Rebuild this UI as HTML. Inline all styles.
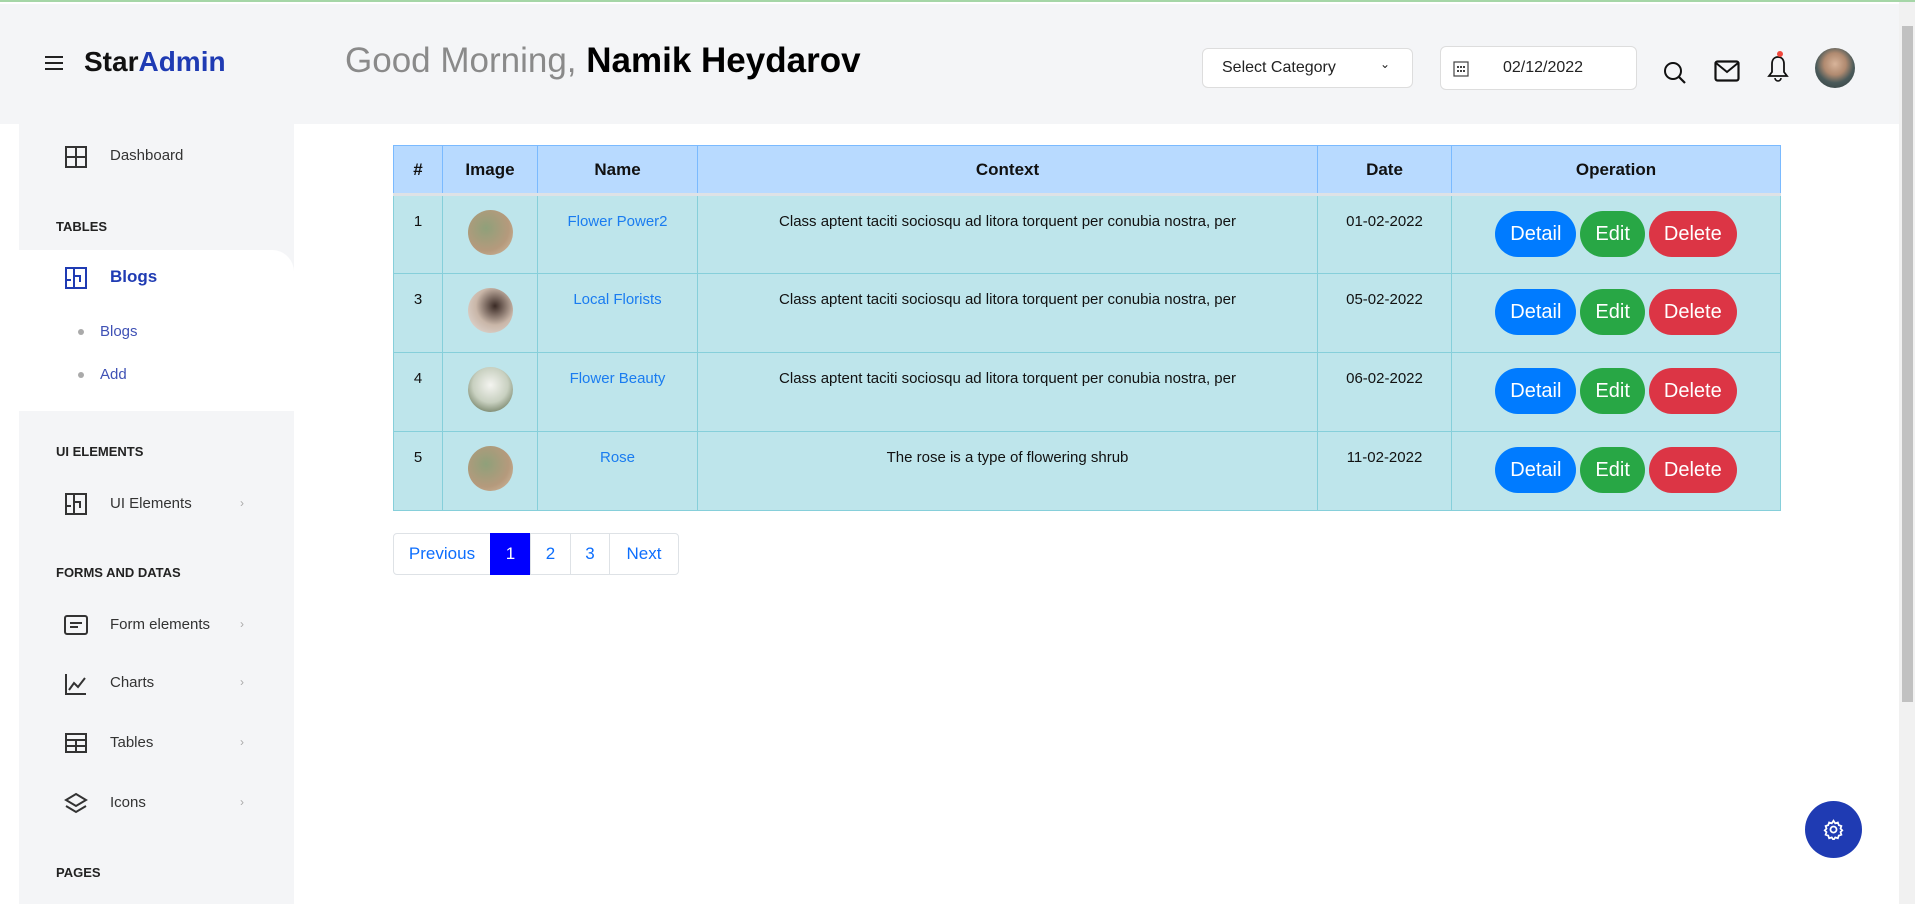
<!DOCTYPE html>
<html><head><meta charset="utf-8"><style>
*{box-sizing:border-box;margin:0;padding:0}
body{width:1915px;height:902px;overflow:hidden;background:#fff;font-family:"Liberation Sans",sans-serif;position:relative;border-top:2px solid #a5d6a7}
.hdr{position:absolute;left:0;top:2px;width:1899px;height:120px;background:#f4f5f7}
.abs{position:absolute}
.side{position:absolute;left:19px;top:122px;width:275px;height:780px;background:#f4f5f7}
.sb{position:absolute;right:0;top:0;width:16px;height:902px;background:#f1f1f1}
.sb div{position:absolute;left:3px;top:24px;width:11px;height:676px;background:#c1c1c1}
.sitem{position:absolute;left:110px;font-size:15px;color:#333}
.sec{position:absolute;left:56px;font-size:13px;font-weight:bold;color:#222}
.ico{position:absolute;left:64px;width:24px;height:24px}
.chev{position:absolute;left:240px;font-size:12px;color:#aaa}
table{position:absolute;left:393px;top:143px;width:1388px;border-collapse:collapse;font-size:15px}
th{background:#b8daff;border:1px solid #7abaff;height:49px;font-size:17px;font-weight:bold;color:#111;border-bottom:3px solid #dee2e6}
td{background:#bee5eb;border:1px solid #86cfda;height:79px;vertical-align:top;text-align:center;padding-top:17px;color:#111}
td a{color:#1a7cf0;text-decoration:none}
.av{width:45px;height:45px;border-radius:50%;margin:0 auto;margin-top:-3px;background:radial-gradient(circle at 40% 40%,#8fa07a,#b59a7c 60%,#d6c0a6)}
.btn{display:inline-block;height:46px;line-height:46px;border-radius:23px;color:#fff;font-size:20px;padding:0 15px;margin:0 2px}
.pg{position:absolute;top:531px;height:42px;border:1px solid #dee2e6;color:#0d6efd;font-size:17px;line-height:40px;text-align:center}
</style></head><body>
<div class="hdr"></div>
<div class="abs" style="left:45px;top:54px;width:18px;height:2px;background:#222;box-shadow:0 6px 0 #222,0 12px 0 #222"></div>
<div class="abs" style="left:84px;top:44px;font-size:28px;font-weight:bold;color:#111">Star<span style="color:#1f3bb3">Admin</span></div>
<div class="abs" style="left:345px;top:39px;font-size:35px;color:#8a8a8a">Good Morning, <span style="color:#000;font-weight:bold">Namik Heydarov</span></div>
<div class="abs" style="left:1202px;top:46px;width:211px;height:40px;background:#fff;border:1px solid #ddd;border-radius:6px;font-size:16px;color:#222;padding:10px 19px">Select Category<span style="position:absolute;right:22px;top:8px;font-size:12px">&#8964;</span></div>
<div class="abs" style="left:1440px;top:44px;width:197px;height:44px;background:#fff;border:1px solid #ddd;border-radius:6px;font-size:16px;color:#222;padding:12px 0 0 62px">02/12/2022
<svg class="abs" style="left:12px;top:13px" width="16" height="17" viewBox="0 0 16 17"><rect x="1" y="2" width="14" height="14" fill="none" stroke="#444" stroke-width="1.2"/><g fill="#444"><rect x="4" y="6" width="2" height="2"/><rect x="7" y="6" width="2" height="2"/><rect x="10" y="6" width="2" height="2"/><rect x="4" y="10" width="2" height="2"/><rect x="7" y="10" width="2" height="2"/><rect x="10" y="10" width="2" height="2"/></g></svg></div>
<svg class="abs" style="left:1662px;top:58px" width="26" height="26" viewBox="0 0 26 26"><circle cx="11" cy="11" r="8" fill="none" stroke="#111" stroke-width="2"/><path d="M17 17l6 6" stroke="#111" stroke-width="2.2"/></svg>
<svg class="abs" style="left:1714px;top:58px" width="26" height="22" viewBox="0 0 26 22"><rect x="1.5" y="1.5" width="23" height="19" rx="2" fill="none" stroke="#111" stroke-width="2.2"/><path d="M2 3l11 9 11-9" fill="none" stroke="#111" stroke-width="2"/></svg>
<svg class="abs" style="left:1765px;top:48px" width="26" height="34" viewBox="0 0 26 34"><path d="M13 7c-4 0-6 3-6 7v8l-3 4h18l-3-4v-8c0-4-2-7-6-7z" fill="none" stroke="#111" stroke-width="1.8"/><path d="M10 28a3 3 0 006 0" fill="none" stroke="#111" stroke-width="1.6"/><circle cx="15" cy="4" r="3" fill="#f0483e"/></svg>
<div class="abs" style="left:1815px;top:46px;width:40px;height:40px;border-radius:50%;background:radial-gradient(circle at 50% 40%,#d8b49a 0,#b08a70 35%,#4a5a5a 60%,#2f3a3a)"></div>
<div class="side"></div>
<div class="abs" style="left:19px;top:248px;width:275px;height:161px;background:#fff;border-radius:0 22px 0 0"></div>
<svg class="ico" style="top:143px" viewBox="0 0 24 24"><rect x="2" y="2" width="20" height="20" fill="none" stroke="#333" stroke-width="2"/><path d="M12 2v20M2 12h20" stroke="#333" stroke-width="2"/></svg>
<div class="sitem" style="top:145px">Dashboard</div>
<div class="sec" style="top:217px">TABLES</div>
<svg class="ico" style="top:264px" viewBox="0 0 24 24"><rect x="2" y="2" width="20" height="20" fill="none" stroke="#1f3bb3" stroke-width="2"/><path d="M10 2v20M10 10h6v6M2 14h5" fill="none" stroke="#1f3bb3" stroke-width="2"/></svg>
<div class="sitem" style="top:265px;font-size:17px;font-weight:bold;color:#1f3bb3">Blogs</div>
<div class="abs" style="left:78px;top:327px;width:6px;height:6px;border-radius:50%;background:#aaa"></div>
<div class="sitem" style="left:100px;top:321px;color:#3f51b5">Blogs</div>
<div class="abs" style="left:78px;top:370px;width:6px;height:6px;border-radius:50%;background:#aaa"></div>
<div class="sitem" style="left:100px;top:364px;color:#3f51b5">Add</div>
<div class="sec" style="top:442px">UI ELEMENTS</div>
<svg class="ico" style="top:490px" viewBox="0 0 24 24"><rect x="2" y="2" width="20" height="20" fill="none" stroke="#333" stroke-width="2"/><path d="M10 2v20M10 10h6v6M2 14h5" fill="none" stroke="#333" stroke-width="2"/></svg>
<div class="sitem" style="top:493px">UI Elements</div><div class="chev" style="top:494px">›</div>
<div class="sec" style="top:563px">FORMS AND DATAS</div>
<svg class="ico" style="top:611px" viewBox="0 0 24 24"><rect x="1" y="3" width="22" height="18" rx="2" fill="none" stroke="#333" stroke-width="2"/><path d="M6 10h12M6 14h8" stroke="#333" stroke-width="2"/></svg>
<div class="sitem" style="top:614px">Form elements</div><div class="chev" style="top:615px">›</div>
<svg class="ico" style="top:670px" viewBox="0 0 24 24"><path d="M2 2v20h20M5 18l5-7 4 4 7-9" fill="none" stroke="#333" stroke-width="2"/></svg>
<div class="sitem" style="top:672px">Charts</div><div class="chev" style="top:673px">›</div>
<svg class="ico" style="top:729px" viewBox="0 0 24 24"><rect x="2" y="3" width="20" height="18" fill="none" stroke="#333" stroke-width="2"/><path d="M2 9h20M12 9v12M2 15h20" stroke="#333" stroke-width="2"/></svg>
<div class="sitem" style="top:732px">Tables</div><div class="chev" style="top:733px">›</div>
<svg class="ico" style="top:789px" viewBox="0 0 24 24"><path d="M12 3l10 6-10 6-10-6z M2 15l10 6 10-6" fill="none" stroke="#333" stroke-width="2"/></svg>
<div class="sitem" style="top:792px">Icons</div><div class="chev" style="top:793px">›</div>
<div class="sec" style="top:863px">PAGES</div>
<table>
<tr><th style="width:49px">#</th><th style="width:95px">Image</th><th style="width:160px">Name</th><th style="width:620px">Context</th><th style="width:134px">Date</th><th>Operation</th></tr>
<tr><td>1</td><td><div class="av"></div></td><td><a>Flower Power2</a></td><td>Class aptent taciti sociosqu ad litora torquent per conubia nostra, per</td><td>01-02-2022</td><td style="padding-top:15px"><span class="btn" style="background:#007bff">Detail</span><span class="btn" style="background:#28a745">Edit</span><span class="btn" style="background:#dc3545">Delete</span></td></tr>
<tr><td>3</td><td><div class="av" style="background:radial-gradient(circle at 60% 40%,#3a2a25,#c9b6a8 50%,#e8e2de)"></div></td><td><a>Local Florists</a></td><td>Class aptent taciti sociosqu ad litora torquent per conubia nostra, per</td><td>05-02-2022</td><td style="padding-top:15px"><span class="btn" style="background:#007bff">Detail</span><span class="btn" style="background:#28a745">Edit</span><span class="btn" style="background:#dc3545">Delete</span></td></tr>
<tr><td>4</td><td><div class="av" style="background:radial-gradient(circle at 50% 40%,#f4f4f0,#c8d0c0 50%,#4a5a3a)"></div></td><td><a>Flower Beauty</a></td><td>Class aptent taciti sociosqu ad litora torquent per conubia nostra, per</td><td>06-02-2022</td><td style="padding-top:15px"><span class="btn" style="background:#007bff">Detail</span><span class="btn" style="background:#28a745">Edit</span><span class="btn" style="background:#dc3545">Delete</span></td></tr>
<tr><td>5</td><td><div class="av"></div></td><td><a>Rose</a></td><td>The rose is a type of flowering shrub</td><td>11-02-2022</td><td style="padding-top:15px"><span class="btn" style="background:#007bff">Detail</span><span class="btn" style="background:#28a745">Edit</span><span class="btn" style="background:#dc3545">Delete</span></td></tr>
</table>
<div class="pg" style="left:393px;width:98px;border-radius:4px 0 0 4px">Previous</div>
<div class="pg" style="left:490px;width:41px;background:#0000ff;color:#fff;border-color:#0000ff">1</div>
<div class="pg" style="left:530px;width:41px">2</div>
<div class="pg" style="left:570px;width:40px">3</div>
<div class="pg" style="left:609px;width:70px;border-radius:0 4px 4px 0">Next</div>
<div class="abs" style="left:1805px;top:799px;width:57px;height:57px;border-radius:50%;background:#1f3bb3"></div>
<svg class="abs" style="left:1823px;top:817px" width="21" height="21" viewBox="0 0 24 24"><path d="M12 2l2 3 3-1 1 3 3 1-1 3 2 2-2 2 1 3-3 1-1 3-3-1-2 3-2-3-3 1-1-3-3-1 1-3-2-2 2-2-1-3 3-1 1-3 3 1z" fill="none" stroke="#fff" stroke-width="2"/><circle cx="12" cy="12" r="3.5" fill="none" stroke="#fff" stroke-width="2"/></svg>
<div class="sb"><div></div></div>
</body></html>
